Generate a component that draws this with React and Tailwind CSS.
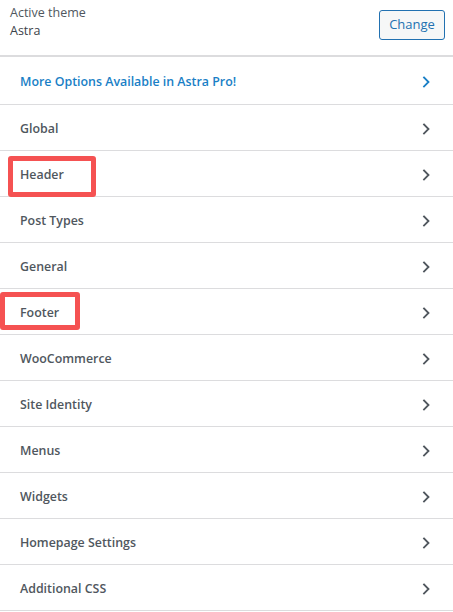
const SECTIONS = [
  'Global',
  'Header',
  'Post Types',
  'General',
  'Footer',
  'WooCommerce',
  'Site Identity',
  'Menus',
  'Widgets',
  'Homepage Settings',
  'Additional CSS',
]

function Chevron({ className }) {
  return (
    <svg className={className} width="16" height="16" viewBox="0 0 16 16" fill="none">
      <path d="M6 3.5l4.5 4.5L6 12.5" stroke="currentColor" strokeWidth="1.8" strokeLinecap="square" />
    </svg>
  )
}

export default function App() {
  return (
    <div className="w-[453px] h-[612px] bg-white overflow-hidden font-['Open_Sans',sans-serif]">
      {/* Active theme */}
      <div className="h-[57px] flex items-start justify-between pl-[10px] pr-[8px] border-b-2 border-[#dcdcde]">
        <div className="pt-[4px] text-[12.5px] leading-[18px] text-[#50575e]">
          <div>Active theme</div>
          <div className="text-[#3c434a]">Astra</div>
        </div>
        <button className="mt-[10px] h-[30px] w-[66px] rounded-[3px] border border-[#2271b1] bg-[#f6f7f7] text-[13px] text-[#2271b1]">
          Change
        </button>
      </div>

      <div className="h-[48px] flex items-center justify-between pl-[20px] pr-[19px] border-b border-[#dcdcde]">
        <span className="pt-[3px] text-[12.4px] font-semibold text-[#1a7fc6]">More Options Available in Astra Pro!</span>
        <Chevron className="mt-[2px] text-[#1a7fc6]" />
      </div>

      {SECTIONS.map((name) => (
        <div key={name} className="relative h-[46px] flex items-center justify-between pl-[20px] pr-[19px] border-b border-[#dcdcde]">
          <span className="pt-[3px] text-[12.4px] font-semibold text-[#50575e]">{name}</span>
          <Chevron className="mt-[2px] text-[#50575e]" />
          {name === 'Header' && (
            <div className="absolute left-[8px] top-[5px] w-[88px] h-[41px] rounded-[3px] border-[5px] border-[#f55252]" />
          )}
          {name === 'Footer' && (
            <div className="absolute left-0 top-[3px] w-[80px] h-[38px] rounded-[3px] border-[5px] border-[#f55252]" />
          )}
        </div>
      ))}
    </div>
  )
}
